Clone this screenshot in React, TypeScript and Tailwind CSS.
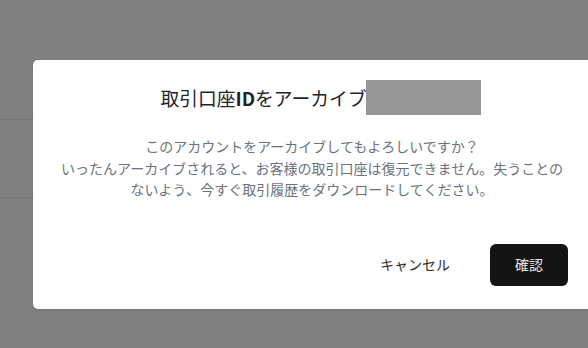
export default function App() {
  return (
    <div
      className="relative h-[348px] w-[588px] overflow-hidden bg-[#808080]"
      style={{ fontFamily: '"Noto Sans CJK JP", "Noto Sans", sans-serif' }}
    >
      {/* underlying page, dimmed by the overlay */}
      <div className="flex flex-col">
        <div className="h-[120px] border-b border-[#767676]" />
        <div className="h-[78px] border-b border-[#767676]" />
      </div>

      {/* Dialog */}
      <div className="absolute left-[33px] top-[60px] flex h-[249px] w-[576px] flex-col rounded-[5px] bg-white px-[24px] pt-[20px] shadow-sm">
        <div className="flex items-center justify-center">
          <h2 className="whitespace-nowrap text-[18.75px] leading-[35px] text-[#1f2328]">
            取引口座<span className="font-semibold">ID</span>をアーカイブ
          </h2>
          <div className="h-[35px] w-[115px] bg-[#969696]" />
        </div>

        <p className="mt-[21px] whitespace-nowrap pr-[18px] text-center text-[14px] leading-[21.5px] text-[#6b7280]">
          このアカウントをアーカイブしてもよろしいですか？
          <br />
          いったんアーカイブされると、お客様の取引口座は復元できません。失うことの
          <br />
          ないよう、今すぐ取引履歴をダウンロードしてください。
        </p>

        <div className="mt-[43px] flex items-center justify-end gap-[24px] pr-[17px]">
          <button className="px-[16px] text-[14px] text-[#2d2d2d]">キャンセル</button>
          <button className="h-[42px] w-[78px] rounded-[6px] bg-[#141414] text-[14px] text-[#e5e5e5]">
            確認
          </button>
        </div>
      </div>
    </div>
  );
}
